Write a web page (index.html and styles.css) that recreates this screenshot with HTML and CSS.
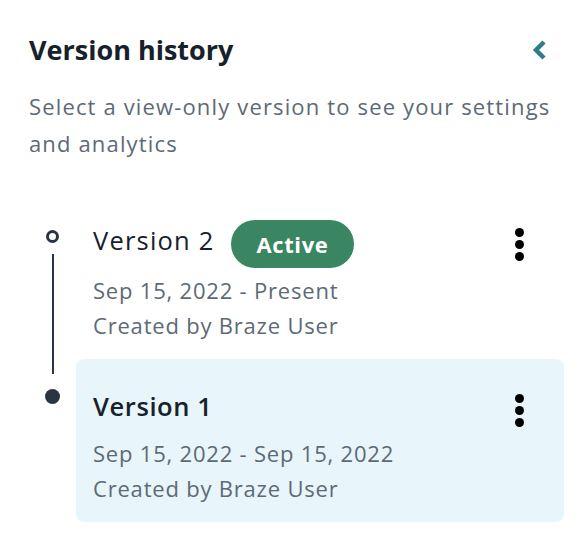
FILE: index.html
```html
<!DOCTYPE html>
<html lang="en">
<head>
<meta charset="utf-8">
<title>Version history</title>
<link rel="stylesheet" href="styles.css">
</head>
<body>
<div class="panel">
  <div class="header">
    <h1 class="title">Version history</h1>
    <button class="collapse" aria-label="Collapse">
      <svg width="16" height="22" viewBox="0 0 16 22"><path d="M13 3 L5 11 L13 19" fill="none" stroke="#2f7d8c" stroke-width="4.5"/></svg>
    </button>
  </div>
  <p class="subtitle">Select a view-only version to see your settings and analytics</p>

  <ul class="timeline">
    <li class="item">
      <div class="marker marker-first">
        <span class="ring"></span>
        <span class="line line-down"></span>
      </div>
      <div class="card card-active">
        <div class="card-head">
          <div class="name-row">
            <span class="name">Version 2</span>
            <span class="badge">Active</span>
          </div>
          <button class="kebab" aria-label="More"><i></i><i></i><i></i></button>
        </div>
        <div class="meta">Sep 15, 2022 - Present</div>
        <div class="meta">Created by Braze User</div>
      </div>
    </li>
    <li class="item">
      <div class="marker marker-last">
        <span class="line line-up"></span>
        <span class="dot"></span>
      </div>
      <div class="card card-selected">
        <div class="card-head">
          <div class="name-row">
            <span class="name name-bold">Version 1</span>
          </div>
          <button class="kebab" aria-label="More"><i></i><i></i><i></i></button>
        </div>
        <div class="meta">Sep 15, 2022 - Sep 15, 2022</div>
        <div class="meta">Created by Braze User</div>
      </div>
    </li>
  </ul>
</div>
</body>
</html>
```
FILE: styles.css
```css
* { box-sizing: border-box; }
html, body { margin: 0; padding: 0; background: #ffffff; }
body { font-family: "Open Sans", "Noto Sans", sans-serif; color: #1b2530; }

.panel {
  width: 586px;
  padding: 32px 22px 0 29px;
}

.header {
  display: flex;
  align-items: center;
  justify-content: space-between;
  height: 36px;
}
.title {
  margin: 0;
  font-size: 27px;
  font-weight: 700;
  line-height: 36px;
  color: #17212b;
}
.collapse {
  border: 0;
  background: none;
  padding: 0;
  margin-right: 17px;
  display: flex;
  cursor: pointer;
}

.subtitle {
  margin: 20px 0 0 0;
  font-size: 22px;
  line-height: 37px;
  color: #5d6a76;
  letter-spacing: 1.15px;
}

.timeline {
  list-style: none;
  margin: 27px 0 0 0;
  padding: 0;
}
.item {
  display: flex;
}
.marker {
  width: 47px;
  flex: none;
  display: flex;
  flex-direction: column;
  align-items: center;
}
.marker-first { padding-top: 41px; }
.ring {
  width: 13px;
  height: 13px;
  border: 3px solid #2b3542;
  border-radius: 50%;
  flex: none;
}
.line {
  width: 2px;
  background: #2b3542;
  flex: none;
}
.line-down { flex: 1; margin-top: 11px; }
.line-up { height: 15px; }
.dot {
  width: 15px;
  height: 15px;
  border-radius: 50%;
  background: #2b3542;
  margin-top: 15px;
  flex: none;
}

.card {
  flex: 1;
  padding: 27px 40px 16px 17px;
  border-radius: 8px;
}
.card-selected { background: #e8f5fb; }

.card-head {
  display: flex;
  justify-content: space-between;
  align-items: center;
  margin-bottom: 9px;
}
.name-row {
  display: flex;
  align-items: center;
  gap: 16px;
}
.card-active { padding-top: 23px; }
.card-active .card-head { margin-bottom: 4.5px; }
.card-active .name-row { align-items: flex-start; }
.card-active .name { margin-top: 10px; }
.card-active .badge { margin-top: 8px; }

.name {
  font-size: 25.5px;
  line-height: 37px;
  color: #17212b;
  letter-spacing: 1.2px;
}
.name-bold { font-weight: 600; letter-spacing: 0.6px; }
.badge {
  height: 48px;
  padding: 0 26px;
  border-radius: 24px;
  background: #3a8562;
  color: #ffffff;
  font-size: 22px;
  font-weight: 700;
  letter-spacing: 0.6px;
  display: flex;
  align-items: center;
}
.kebab {
  border: 0;
  background: none;
  padding: 0;
  display: flex;
  flex-direction: column;
  gap: 3px;
  margin-top: 8px;
  cursor: pointer;
}
.kebab i {
  display: block;
  width: 9px;
  height: 9px;
  border-radius: 50%;
  background: #000000;
}

.meta {
  font-size: 22px;
  line-height: 35px;
  color: #5d6a76;
  letter-spacing: 0.8px;
}
```
